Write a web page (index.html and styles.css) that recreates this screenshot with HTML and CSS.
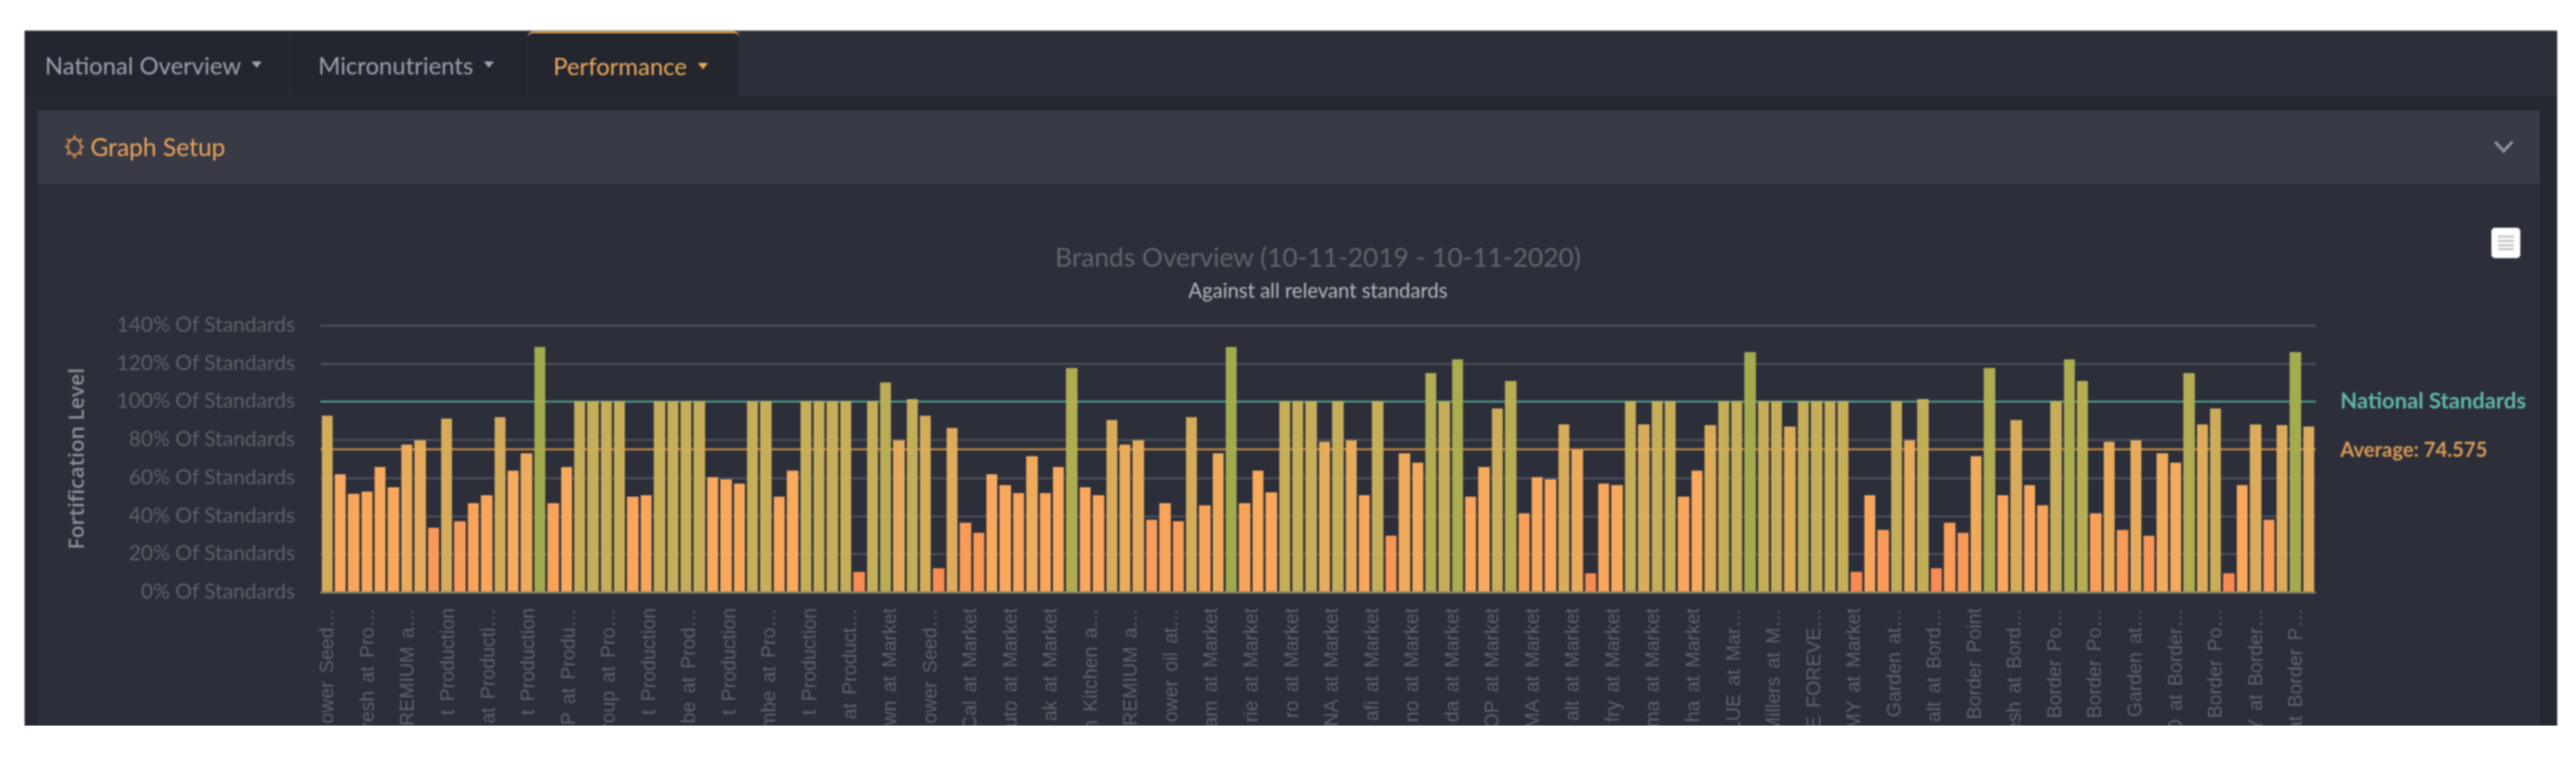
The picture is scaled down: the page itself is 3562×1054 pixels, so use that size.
FILE: index.html
```html
<!DOCTYPE html>
<html lang="en">

<head>
    <meta charset="UTF-8">
    <title>Brands Overview</title>
    <link rel="stylesheet" href="styles.css">
</head>

<body>
    <div class="dashboard">
        <ul class="tabs">
            <li class="tab tab-first">National Overview <i class="caret"></i></li>
            <li class="tab tab-second">Micronutrients <i class="caret"></i></li>
            <li class="tab tab-active">Performance <i class="caret"></i></li>
        </ul>

        <div class="content">
            <div class="panel">
                <div class="panel-title">
                    <svg class="gear" viewBox="0 0 28 34" width="28" height="34">
                        <ellipse cx="14" cy="17" rx="9" ry="11" fill="none" stroke="currentColor" stroke-width="2.5"/>
                        <path d="M14 1v5M14 28v5M1 17h4M23 17h4M4 6l3 4M24 6l-3 4M4 28l3-4M24 28l-3-4" fill="none" stroke="currentColor" stroke-width="3"/>
                    </svg>
                    Graph Setup
                </div>
                <svg class="chevron" viewBox="0 0 28 20" width="28" height="20">
                    <path d="M2 3l12 13L26 3" fill="none" stroke="currentColor" stroke-width="4"/>
                </svg>
            </div>

            <div class="chart">
                <button class="chart-menu">
                    <svg viewBox="0 0 20 20" width="22" height="22">
                        <path d="M0 2h20M0 7.500h20M0 13h20M0 18h20" stroke="#c4c4c4" stroke-width="2.600"/>
                    </svg>
                </button>

                <div class="chart-head">
                    <h2 class="chart-title">Brands Overview (10-11-2019 - 10-11-2020)</h2>
                    <p class="chart-subtitle">Against all relevant standards</p>
                </div>

                <div class="y-axis">
                    <div class="y-title">Fortification Level</div>
                    <div class="y-labels">
                        <span>140% Of Standards</span>
                        <span>120% Of Standards</span>
                        <span>100% Of Standards</span>
                        <span>80% Of Standards</span>
                        <span>60% Of Standards</span>
                        <span>40% Of Standards</span>
                        <span>20% Of Standards</span>
                        <span>0% Of Standards</span>
                    </div>
                </div>

                <div class="plot" id="plot"></div>

                <div class="legend">
                    <span class="legend-national">National Standards</span>
                    <span class="legend-average">Average: 74.575</span>
                </div>

                <div class="x-axis" id="xAxis"></div>
            </div>
        </div>
    </div>

    <script src="script.js"></script>
</body>

</html>
```

FILE: styles.css
```css
html,
body {
    margin: 0;
    padding: 0;
    background: #fff;
}

.dashboard {
    display: flex;
    flex-direction: column;
    height: 961px;
    margin: 42px 26px 0 34px;
    overflow: hidden;
    border-top: 1px solid #7b7d84;
    background: #252831;
    font-family: Lato, "Open Sans", sans-serif;
    filter: blur(1.300px);
}

/* tabs */
.tabs {
    display: flex;
    flex: none;
    height: 90px;
    margin: 0;
    padding: 0;
    list-style: none;
    background: #2d303a;
}

.tab {
    display: flex;
    align-items: center;
    box-sizing: border-box;
    padding-top: 3px;
    background: #23262f;
    color: #9aa2aa;
    font-size: 33px;
    white-space: nowrap;
}

.tab-first {
    width: 367px;
    padding-left: 28px;
    border-right: 2px solid #2b2e37;
}

.tab-second {
    width: 329px;
    padding-left: 39px;
    border-right: 2px solid #2b2e37;
}

.tab-active {
    width: 292px;
    padding-left: 35px;
    border-top: 3px solid #e0994f;
    border-radius: 8px 8px 0 0;
    color: #eba75a;
}

.caret {
    width: 0;
    height: 0;
    margin-left: 15px;
    border-top: 9px solid currentColor;
    border-left: 7px solid transparent;
    border-right: 7px solid transparent;
}

.content {
    display: flex;
    flex: 1;
    flex-direction: column;
    min-height: 0;
    padding: 20px 24px 0 18px;
}

/* graph setup bar */
.panel {
    display: flex;
    flex: none;
    align-items: center;
    justify-content: space-between;
    height: 101px;
    padding: 0 36px 2px 37px;
    box-sizing: border-box;
    background: #383a45;
}

.panel-title {
    display: flex;
    align-items: center;
    gap: 8px;
    color: #e8a358;
    font-size: 34px;
}

.gear {
    color: #c98c4c;
}

.chevron {
    color: #8d96a0;
}

/* chart */
.chart {
    position: relative;
    display: grid;
    flex: 1;
    grid-template-columns: 391px 2759px 1fr;
    grid-template-rows: 196px 369px 1fr;
    min-height: 0;
    background: #2c2f39;
}

.chart-menu {
    position: absolute;
    top: 61px;
    right: 27px;
    display: flex;
    align-items: center;
    justify-content: center;
    width: 40px;
    height: 42px;
    padding: 0;
    border: 0;
    border-radius: 5px;
    background: #fff;
}

.chart-head {
    grid-column: 2;
    padding-top: 76px;
    text-align: center;
}

.chart-title {
    margin: 0;
    color: #626468;
    font-size: 36.400px;
    font-weight: 400;
    line-height: 50px;
}

.chart-subtitle {
    margin: 0;
    color: #b6b8bc;
    font-size: 28px;
    line-height: 43px;
}

.y-axis {
    display: flex;
    grid-column: 1;
    grid-row: 2;
}

.y-title {
    display: flex;
    align-items: center;
    justify-content: center;
    width: 104px;
    color: #8c8e93;
    font-family: "Open Sans", sans-serif;
    font-size: 29px;
    font-weight: 600;
    white-space: nowrap;
    writing-mode: vertical-rl;
    transform: rotate(180deg);
}

.y-labels {
    display: flex;
    flex: 1;
    flex-direction: column;
    justify-content: space-between;
    margin: -2px 0 2px;
    padding-right: 35px;
    color: #5e6065;
    font-size: 29px;
    line-height: 0;
    text-align: right;
}

.y-labels span {
    display: block;
    height: 0;
}

.plot {
    position: relative;
    display: flex;
    grid-column: 2;
    grid-row: 2;
    align-items: flex-end;
}

.line {
    position: absolute;
    left: 0;
    right: 0;
    height: 3px;
    margin-bottom: -2px;
    background: #4a4c57;
}

.line-national {
    background: #4a8f82;
}

.line-average {
    background: #b67f42;
}

.line-base {
    z-index: 2;
    background: #86806c;
}

.bar {
    position: relative;
    flex: 1;
    margin: 0 1.500px;
    opacity: .97;
}

.legend {
    display: flex;
    flex-direction: column;
    gap: 32px;
    grid-column: 3;
    grid-row: 2;
    padding: 85px 0 0 34px;
    font-size: 28px;
    font-weight: 700;
    line-height: 36px;
    white-space: nowrap;
}

.legend-national {
    color: #5fb8a3;
    font-size: 30.400px;
}

.legend-average {
    color: #d99a55;
}

.x-axis {
    display: flex;
    grid-column: 2;
    grid-row: 3;
    margin-left: -18.390px;
    padding-top: 22px;
}

.x-label {
    display: flex;
    flex: 1;
    align-items: flex-start;
    justify-content: center;
}

.x-label span {
    color: #5f6168;
    font-family: "Liberation Sans", Arial, sans-serif;
    font-size: 27px;
    line-height: 30px;
    word-spacing: 4px;
    white-space: nowrap;
    writing-mode: vertical-rl;
    transform: rotate(180deg);
}
```

FILE: script.js
```js
var S = 100; // bars sitting right on the standard

var values = [
    92.6, 62, 51.6, 52.9, 65.6, 55, 77.3, 79.8, 33.7, 91.1,
    37.2, 46.7, 50.7, 92, 63.6, 72.7, 128.7, 46.5, 65.6, S,
    S, S, S, 50, 51, S, S, S, S, 60.2,
    59.2, 56.9, S, S, 50, 63.6, S, S, S, S,
    10.6, S, 110, 79.8, 101.4, 92.6, 12.4, 86, 36.3, 31,
    62, 56, 51.8, 71.5, 51.8, 65.6, 117.6, 55, 51, 90.2,
    77.3, 79.8, 37.9, 46.7, 37.2, 92, 45.6, 72.7, 128.7, 46.5,
    63.6, 52.5, S, S, S, 78.9, S, 79.8, 50.7, S,
    29.5, 72.7, 67.8, 115, S, 122, 50, 65.6, 96.2, 110.8,
    41.2, 60.2, 59.2, 88.2, 74.7, 9.8, 56.9, 56, S, 88.2,
    S, S, 50, 63.6, 87.5, S, S, 126.1, S, S,
    86.8, S, S, S, S, 10.6, 50.7, 32.8, S, 79.8,
    101.4, 12.4, 36.3, 31, 71.5, 117.6, 50.7, 90.2, 56, 45.6,
    S, 122, 110.8, 41.2, 78.9, 32.8, 79.8, 29.5, 72.7, 67.8,
    115, 88.2, 96.2, 9.8, 56, 88.2, 37.9, 87.5, 126.1, 86.8
];

var labels = [
    "ower Seed…", "resh at Pro…", "PREMIUM a…", "t Production", "at Producti…",
    "t Production", "P at Produ…", "roup at Pro…", "t Production", "be at Prod…",
    "t Production", "mbe at Pro…", "t Production", "at Product…", "wn at Market",
    "ower Seed…", "Cal at Market", "uto at Market", "ak at Market", "n Kitchen a…",
    "PREMIUM a…", "ower oil at…", "am at Market", "rie at Market", "ro at Market",
    "NA at Market", "afi at Market", "no at Market", "da at Market", "OP at Market",
    "MA at Market", "alt at Market", "fry at Market", "ma at Market", "ha at Market",
    "LUE at Mar…", "Millers at M…", "CE FOREVE…", "MY at Market", ". Garden at…",
    "alt at Bord…", "Border Point", "esh at Bord…", ". Border Po…", ". Border Po…",
    "Garden at…", "O at Border…", ". Border Po…", "Y at Border…", "at Border P…"
];

// colour axis of the chart, value -> rgb
var stops = [
    [0, 255, 134, 82],
    [50, 255, 170, 92],
    [65, 255, 174, 94],
    [90, 222, 176, 92],
    [100, 203, 178, 90],
    [130, 163, 176, 77]
];

function barColor(v) {
    for (var i = 1; i < stops.length; i++) {
        if (v <= stops[i][0]) {
            var a = stops[i - 1];
            var b = stops[i];
            var t = (v - a[0]) / (b[0] - a[0]);
            return "rgb(" + [1, 2, 3].map(function (k) {
                return Math.round(a[k] + (b[k] - a[k]) * t);
            }).join(",") + ")";
        }
    }
    return "rgb(163,176,77)";
}

function addLine(plot, value, name) {
    var line = document.createElement("div");
    line.className = "line " + name;
    line.style.bottom = (value / 140 * 100) + "%";
    plot.appendChild(line);
}

var plot = document.getElementById("plot");
[20, 40, 60, 80, 120, 140].forEach(function (v) {
    addLine(plot, v, "");
});
addLine(plot, 100, "line-national");
addLine(plot, 75, "line-average");
addLine(plot, 0, "line-base");

values.forEach(function (v) {
    var bar = document.createElement("div");
    bar.className = "bar";
    bar.style.height = (v / 140 * 100) + "%";
    bar.style.background = barColor(v);
    plot.appendChild(bar);
});

var xAxis = document.getElementById("xAxis");
labels.forEach(function (text) {
    var cell = document.createElement("div");
    cell.className = "x-label";
    cell.innerHTML = "<span>" + text + "</span>";
    xAxis.appendChild(cell);
});
```
